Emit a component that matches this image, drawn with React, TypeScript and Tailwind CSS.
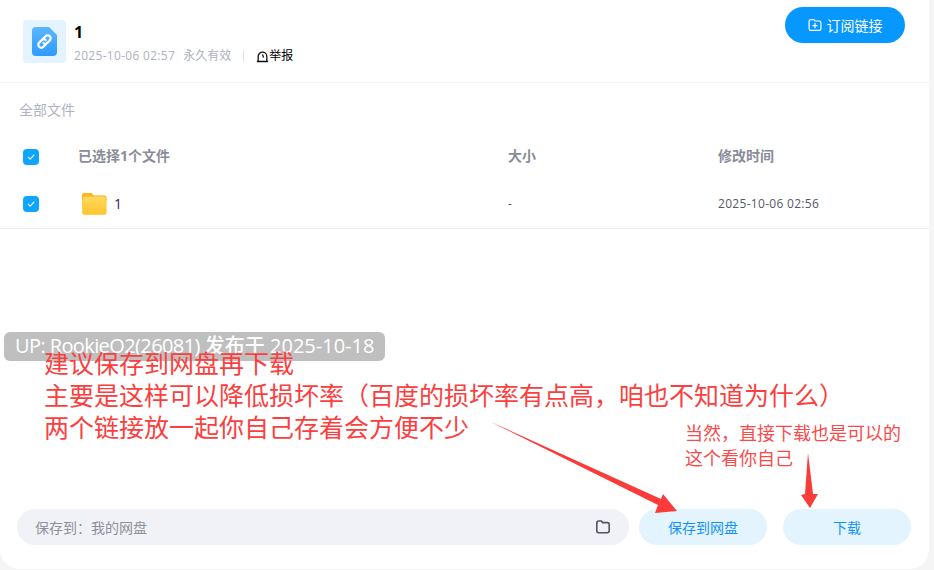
const cjk = "font-['Open_Sans','Noto_Sans_CJK_SC',sans-serif]";

function CheckBox() {
  return (
    <span className="flex size-4 items-center justify-center rounded-[4px] bg-[#0ea5ff]">
      <svg width="10" height="10" viewBox="0 0 10 10" fill="none">
        <path d="M2.2 5.2 4.2 7.1 7.9 3.2" stroke="#fff" strokeWidth="1.1" strokeLinecap="round" strokeLinejoin="round" />
      </svg>
    </span>
  );
}

function LinkFileIcon() {
  return (
    <div className="flex size-[43px] items-center justify-center rounded-[4px] bg-[#e3f3ff]">
      <svg width="25" height="29" viewBox="0 0 25 29">
        <defs>
          <linearGradient id="fileBlue" x1="0" y1="0" x2="0" y2="1">
            <stop offset="0" stopColor="#5cb6ff" />
            <stop offset="1" stopColor="#2f9bff" />
          </linearGradient>
        </defs>
        <path d="M4 0H17L25 8V25a4 4 0 0 1-4 4H4a4 4 0 0 1-4-4V4a4 4 0 0 1 4-4Z" fill="url(#fileBlue)" />
        <g fill="none" stroke="#fff" strokeWidth="2.2" strokeLinecap="round">
          <path d="M11.2 11.6 13.6 9.2a2.9 2.9 0 0 1 4.2 4.2l-2.4 2.4a2.9 2.9 0 0 1-4 .2" />
          <path d="M13.8 17.4 11.4 19.8a2.9 2.9 0 0 1-4.2-4.2l2.4-2.4a2.9 2.9 0 0 1 4-.2" />
        </g>
      </svg>
    </div>
  );
}

function FolderIcon() {
  return (
    <svg width="25" height="22" viewBox="0 0 25 22">
      <defs>
        <linearGradient id="folderYellow" x1="0" y1="0" x2="0" y2="1">
          <stop offset="0" stopColor="#ffd95e" />
          <stop offset="1" stopColor="#ffc62f" />
        </linearGradient>
      </defs>
      <path d="M2 0H9.5L12 2.5H22.5A2 2 0 0 1 24.5 4.5V8H0V2A2 2 0 0 1 2 0Z" fill="#ffb31f" />
      <rect x="0.2" y="2.8" width="24.3" height="19" rx="2" fill="#ffc22e" />
      <rect x="1.2" y="3.8" width="22.3" height="17" rx="1.5" fill="url(#folderYellow)" />
    </svg>
  );
}

export default function App() {
  return (
    <div className={`relative h-[570px] w-[934px] overflow-hidden bg-[#f5f5f6] ${cjk}`}>
      <div className="flex h-[569px] w-[929px] flex-col rounded-b-[20px] bg-white">
        {/* head */}
        <div className="flex h-[83px] shrink-0 justify-between border-b border-[#f1f2f6] pl-[23px] pr-[24px]">
          <div className="flex items-start gap-[8px] pt-[20px]">
            <LinkFileIcon />
            <div>
              <div className="text-[16px] font-bold leading-[24px] text-black">1</div>
              <div className="mt-[2px] flex items-center text-[12px] leading-[20px] text-[#aeb1bf]">
                <span className="tracking-[0.3px]">2025-10-06 02:57</span>
                <span className="ml-[8px]">永久有效</span>
                <span className="mx-[12px] h-[12px] w-px bg-[#e0e2e8]" />
                <svg width="13" height="13" viewBox="0 0 12 12" fill="none" stroke="#111" strokeWidth="1.2">
                  <path d="M.8 10.6h10.4M2 10.6V6a4 4 0 0 1 8 0v4.6" />
                  <path d="M6 4 7 7" />
                </svg>
                <span className="text-black">举报</span>
              </div>
            </div>
          </div>
          <button className="mt-[7px] flex h-[36px] w-[120px] items-center justify-center gap-[5px] rounded-full bg-[#0798ff] text-[14px] text-white">
            <svg width="14" height="14" viewBox="0 0 13 13" fill="none" stroke="#fff" strokeWidth="1.1" strokeLinecap="round">
              <path d="M2.5 1.5h3l1 1.3h4a1.5 1.5 0 0 1 1.5 1.5v5.7a1.5 1.5 0 0 1-1.5 1.5h-8A1.5 1.5 0 0 1 1 10V3a1.5 1.5 0 0 1 1.5-1.5Z" />
              <path d="M4.5 7h4M6.5 5v4" />
            </svg>
            订阅链接
          </button>
        </div>

        <div className="pl-[19px] pt-[17px] text-[14px] leading-[20px] text-[#b0b3c0]">全部文件</div>

        {/* table */}
        <div className="mt-[14px] grid h-[45px] grid-cols-[55px_430px_210px_1fr] items-center pl-[23px] text-[14px] font-bold text-[#8a8d99]">
          <CheckBox />
          <span className="-translate-y-px">已选择1个文件</span>
          <span className="-translate-y-px">大小</span>
          <span className="-translate-y-px">修改时间</span>
        </div>
        <div className="grid h-[50px] grid-cols-[56px_429px_210px_1fr] items-center border-b border-[#ecedf3] pl-[23px] text-[12px] text-[#555866]">
          <CheckBox />
          <span className="flex items-center gap-[7px] pl-[3px]">
            <FolderIcon />
            <span className="text-[14px] text-[#3b1a66]">1</span>
          </span>
          <span>-</span>
          <span className="tracking-[0.3px]">2025-10-06 02:56</span>
        </div>

        {/* bottom bar */}
        <div className="mt-auto mb-[24px] flex items-center pl-[17px] text-[14px]">
          <div className="flex h-[36px] w-[612px] items-center justify-between rounded-full bg-[#f1f2f7] pl-[18px] pr-[18px] text-[#8e909c]">
            <span>保存到：我的网盘</span>
            <svg width="16" height="16" viewBox="0 0 16 16" fill="none" stroke="#4f5565" strokeWidth="1.6">
              <path d="M2 4V3.4A1.4 1.4 0 0 1 3.4 2h3l1.2 1.6h5A1.6 1.6 0 0 1 14.2 5.2v6.6a1.9 1.9 0 0 1-1.9 1.9H3.7a1.9 1.9 0 0 1-1.9-1.9V4Z" />
            </svg>
          </div>
          <button className="ml-[10px] h-[36px] w-[128px] rounded-full bg-[#e3f4ff] text-[#1493f5]">保存到网盘</button>
          <button className="ml-[16px] h-[36px] w-[128px] rounded-full bg-[#e3f4ff] text-[#1493f5]">下载</button>
        </div>
      </div>

      {/* annotations on top of the screenshot */}
      <div className="absolute left-[4px] top-[332px] flex h-[29px] w-[381px] items-center rounded-[6px] bg-[#bfbfbf] pb-[1px] pl-[11px] text-[20px] font-medium whitespace-nowrap text-white">
        <span className="tracking-[-0.6px]">UP: RookieO2(26081)</span>
        <span className="ml-[5px]">发布于 2025-10-18</span>
      </div>
      <div className="absolute left-[44px] top-[346px] text-[25px] leading-[32px] whitespace-nowrap text-[#fb3f3f] font-['Noto_Sans_CJK_SC',sans-serif]">
        <div>建议保存到网盘再下载</div>
        <div>主要是这样可以降低损坏率（百度的损坏率有点高，咱也不知道为什么）</div>
        <div>两个链接放一起你自己存着会方便不少</div>
      </div>
      <div className="absolute left-[685px] top-[420px] text-[18px] leading-[25px] whitespace-nowrap text-[#fb4a4a] font-['Noto_Sans_CJK_SC',sans-serif]">
        <div>当然，直接下载也是可以的</div>
        <div>这个看你自己</div>
      </div>
      <svg className="absolute left-0 top-0" width="934" height="570" viewBox="0 0 934 570">
        <polygon points="491,422 661,499 663,494 677,511 655,513 658,505" fill="#fb3a3a" />
        <polygon points="808,453 813,494 818,494 810,508 801,495 805,494" fill="#fb3a3a" />
      </svg>
    </div>
  );
}
